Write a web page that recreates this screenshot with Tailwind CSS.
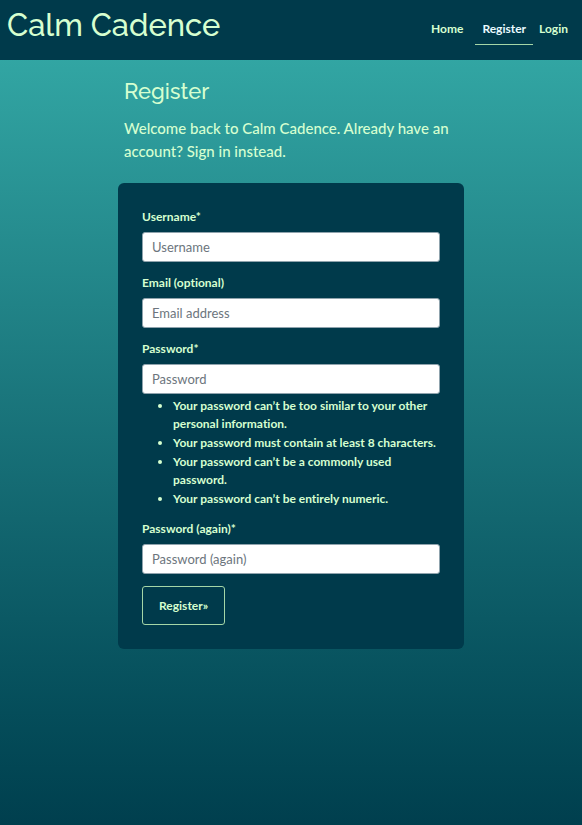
<!DOCTYPE html>
<html lang="en">
<head>
<meta charset="utf-8">
<meta name="viewport" content="width=device-width, initial-scale=1">
<title>Calm Cadence - Register</title>
<script src="https://cdn.jsdelivr.net/npm/@tailwindcss/browser@4"></script>
</head>
<body class="flex min-h-screen flex-col bg-linear-to-b from-[#36aeaa] to-[#003f4e] font-['Lato',sans-serif] text-[12px] font-bold text-[#d6ffd0] [font-variant-ligatures:none]">
<header class="flex h-[60px] items-start justify-between bg-[#003a4b] pr-2 pl-[7px]">
  <a href="#" class="pt-1 font-['Raleway','Lato',sans-serif] text-[31px] leading-[43px] font-medium">Calm Cadence</a>
  <nav class="flex pt-3">
    <a href="#" class="mr-[6px] px-[6px] pt-[9px] pb-[7px] leading-4">Home</a>
    <a href="#" aria-current="page" class="border-b border-[#a5d6a7] px-[7px] pt-[9px] pb-[7px] leading-4 text-[#eafaff]">Register</a>
    <a href="#" class="px-[6px] pt-[9px] pb-[7px] leading-4">Login</a>
  </nav>
</header>
<main class="mx-auto w-full max-w-[346px] pt-4">
  <div class="px-[6px]">
    <h1 class="font-['Raleway','Lato',sans-serif] text-[22px] leading-[30px] font-medium">Register</h1>
    <p class="mt-[11px] text-[15px] leading-[23px] font-medium">Welcome back to Calm Cadence. Already have an account? Sign in instead.</p>
  </div>
  <form class="mt-5 flex flex-col rounded-md bg-[#003a4b] p-6">
    <label for="username" class="leading-5">Username*</label>
    <input id="username" type="text" placeholder="Username" class="mt-[5px] h-[30px] w-full rounded-[3px] border border-[#8fa3ad] bg-white px-[9px] text-[13px] font-normal text-gray-800 placeholder:text-[#6c757d]">
    <label for="email" class="mt-[11px] leading-5">Email (optional)</label>
    <input id="email" type="email" placeholder="Email address" class="mt-[5px] h-[30px] w-full rounded-[3px] border border-[#8fa3ad] bg-white px-[9px] text-[13px] font-normal text-gray-800 placeholder:text-[#6c757d]">
    <label for="password" class="mt-[11px] leading-5">Password*</label>
    <input id="password" type="password" placeholder="Password" aria-describedby="rules" class="mt-[5px] h-[30px] w-full rounded-[3px] border border-[#8fa3ad] bg-white px-[9px] text-[13px] font-normal text-gray-800 placeholder:text-[#6c757d]">
    <ul id="rules" class="mt-[3px] list-disc space-y-px pl-[31px] leading-[18px]">
      <li>Your password can’t be too similar to your other personal information.</li>
      <li>Your password must contain at least 8 characters.</li>
      <li>Your password can’t be a commonly used password.</li>
      <li>Your password can’t be entirely numeric.</li>
    </ul>
    <label for="again" class="mt-[11px] leading-5">Password (again)*</label>
    <input id="again" type="password" placeholder="Password (again)" class="mt-[5px] h-[30px] w-full rounded-[3px] border border-[#8fa3ad] bg-white px-[9px] text-[13px] font-normal text-gray-800 placeholder:text-[#6c757d]">
    <button type="submit" class="mt-3 h-[39px] self-start rounded-[3px] border border-[#a5d6a7] px-4">Register»</button>
  </form>
</main>
</body>
</html>
